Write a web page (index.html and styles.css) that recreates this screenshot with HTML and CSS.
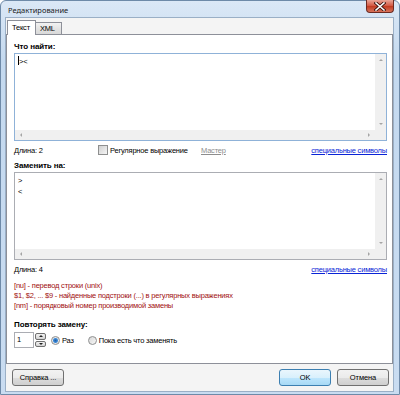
FILE: index.html
```html
<!DOCTYPE html>
<html lang="ru">
<head>
  <meta charset="UTF-8" />
  <title>Редактирование</title>
  <link rel="stylesheet" href="styles.css">
</head>
<body>
  <div class="window">
    <div class="titlebar">
      <span class="title">Редактирование</span>
      <div class="close">
        <svg width="12" height="9" viewBox="0 0 12 9">
          <path d="M2 1 L10 8 M10 1 L2 8" stroke="#3b1410" stroke-width="3.2" stroke-linecap="square"/>
          <path d="M2 1 L10 8 M10 1 L2 8" stroke="#ffffff" stroke-width="1.6" stroke-linecap="square"/>
        </svg>
      </div>
    </div>

    <div class="client">
      <div class="tabs">
        <span class="tab active">Текст</span>
        <span class="tab">XML</span>
      </div>

      <div class="page">
        <div class="label">Что найти:</div>
        <div class="editor focus">
          <div class="text"><span class="caret"></span>&gt;&lt;</div>
          <div class="vscroll"><span class="arr up"></span><span class="arr down"></span></div>
          <div class="hscroll"><span class="arr left"></span><span class="arr right"></span></div>
          <div class="corner"></div>
        </div>
        <div class="info">
          <span class="len">Длина: 2</span>
          <label class="check"><span class="box"></span>Регулярное выражение</label>
          <span class="disabled">Мастер</span>
          <a href="#" class="link">специальные символы</a>
        </div>

        <div class="label second">Заменить на:</div>
        <div class="editor">
          <div class="text">&gt;<br>&lt;</div>
          <div class="vscroll"><span class="arr up"></span><span class="arr down"></span></div>
          <div class="hscroll"><span class="arr left"></span><span class="arr right"></span></div>
          <div class="corner"></div>
        </div>
        <div class="info">
          <span class="len">Длина: 4</span>
          <a href="#" class="link">специальные символы</a>
        </div>

        <div class="hints">
          <div>[nu] - перевод строки (unix)</div>
          <div>$1, $2, ... $9 - найденные подстроки (...) в регулярных выражениях</div>
          <div>[nm] - порядковый номер производимой замены</div>
        </div>

        <div class="label third">Повторять замену:</div>
        <div class="repeat">
          <div class="spin">
            <span class="num">1</span>
            <div class="spinbtns"><span class="sb up"></span><span class="sb down"></span></div>
          </div>
          <label class="radio"><span class="dot checked"></span>Раз</label>
          <label class="radio"><span class="dot"></span>Пока есть что заменять</label>
        </div>
      </div>

      <div class="footer">
        <button class="btn">Справка ...</button>
        <div class="right">
          <button class="btn default">OK</button>
          <button class="btn">Отмена</button>
        </div>
      </div>
    </div>
  </div>
</body>
</html>
```

FILE: styles.css
```css
body {
  margin: 0;
  font-family: "Liberation Sans", Arial, sans-serif;
  font-size: 7.5px;
  letter-spacing: -0.2px;
  color: #000000;
}
.window {
  width: 400px;
  height: 395px;
  box-sizing: border-box;
  background: linear-gradient(#dbe8f6, #c4d9ef 60px, #c9dcf1);
  border: 1px solid #6e8aa8;
  border-radius: 6px 6px 0 0;
  padding: 0 5px 2px 4px;
  display: flex;
  flex-direction: column;
}
.titlebar {
  height: 16px;
  display: flex;
  justify-content: space-between;
  align-items: flex-start;
}
.title {
  font-family: "Noto Sans", sans-serif;
  font-size: 7.5px;
  letter-spacing: 0;
  margin: 4px 0 0 3px;
  color: #1b1b1b;
}
.close {
  width: 28px;
  height: 13px;
  margin-top: -1px;
  box-sizing: border-box;
  border: 1px solid #6b2a22;
  border-top: none;
  border-radius: 0 0 4px 4px;
  background: linear-gradient(#e9a597, #d2553f 50%, #c0391f 51%, #d8735b);
  display: flex;
  align-items: center;
  justify-content: center;
}
.client {
  flex: 1;
  background: #f4f4f4;
  display: flex;
  flex-direction: column;
  border: 1px solid #9aafc6;
}
.tabs {
  height: 16px;
  display: flex;
  align-items: flex-end;
  padding-left: 1px;
}
.tab {
  height: 11px;
  padding: 0 6px 0 4px;
  line-height: 11px;
  border: 1px solid #8d9099;
  border-bottom: none;
  background: linear-gradient(#f2f2f2, #e3e3e3 50%, #d9d9d9);
  margin-right: -1px;
}
.tab.active {
  height: 14px;
  line-height: 14px;
  background: #ffffff;
  position: relative;
  z-index: 1;
  margin-bottom: -1px;
  padding: 0 5px 0 4px;
}
.page {
  height: 328px;
  background: #ffffff;
  border: 1px solid #8d9099;
  padding: 0 5px 0 7px;
}
.label {
  font-size: 8px;
  letter-spacing: -0.1px;
  font-weight: bold;
  height: 10px;
  line-height: 10px;
  margin-top: 7px;
  margin-bottom: 1px;
}
.label.second { margin-top: 4px; }
.label.third { margin-top: 9px; }
.editor {
  height: 88px;
  box-sizing: border-box;
  border: 1px solid #abadb3;
  display: grid;
  grid-template-columns: 1fr 11px;
  grid-template-rows: 1fr 10px;
}
.editor.focus {
  border-color: #8fb2d8;
}
.text {
  padding: 2px 3px;
  line-height: 11px;
}
.caret {
  display: inline-block;
  width: 1px;
  height: 9px;
  background: #000000;
  vertical-align: -1px;
}
.vscroll, .hscroll, .corner {
  background: #f0f0f0;
  display: flex;
  justify-content: space-between;
  align-items: center;
}
.vscroll {
  flex-direction: column;
  padding: 5px 0;
}
.hscroll {
  padding: 0 5px;
}
.arr {
  width: 0;
  height: 0;
  border: 2px solid transparent;
}
.arr.up { border-bottom-color: #a5a5a5; border-top-width: 0; }
.arr.down { border-top-color: #a5a5a5; border-bottom-width: 0; }
.arr.left { border-right-color: #a5a5a5; border-left-width: 0; }
.arr.right { border-left-color: #a5a5a5; border-right-width: 0; }
.info {
  height: 14px;
  margin-top: 2px;
  display: flex;
  align-items: center;
}
.len {
  width: 84px;
}
.check {
  display: flex;
  align-items: center;
  width: 103px;
}
.box {
  width: 10px;
  height: 10px;
  box-sizing: border-box;
  border: 1px solid #8e8f8f;
  background: linear-gradient(135deg, #d0d0d0, #f6f6f6);
  margin-right: 2px;
}
.disabled {
  color: #8d8d8d;
  text-decoration: underline;
}
.link {
  margin-left: auto;
  color: #0a24d6;
  text-decoration: underline;
}
.hints {
  margin-top: 5px;
  color: #a11010;
  line-height: 10px;
}
.repeat {
  display: flex;
  align-items: center;
  margin-top: 2px;
  height: 16px;
}
.spin {
  display: flex;
  height: 16px;
  width: 32px;
}
.num {
  width: 20px;
  box-sizing: border-box;
  border: 1px solid #abadb3;
  background: #ffffff;
  padding-left: 2px;
  line-height: 14px;
}
.spinbtns {
  width: 11px;
  margin-left: 1px;
  display: flex;
  flex-direction: column;
  gap: 1px;
  padding: 1px 0;
}
.sb {
  flex: 1;
  border: 1px solid #707070;
  border-radius: 2px;
  background: linear-gradient(#f2f2f2, #d4d4d4);
  display: flex;
  align-items: center;
  justify-content: center;
}
.sb::after {
  content: "";
  border: 2px solid transparent;
}
.sb.up::after { border-bottom-color: #222; border-top-width: 0; }
.sb.down::after { border-top-color: #222; border-bottom-width: 0; }
.radio {
  display: flex;
  align-items: center;
  margin-left: 5px;
}
.radio + .radio {
  margin-left: 14px;
}
.dot {
  width: 9px;
  height: 9px;
  box-sizing: border-box;
  border-radius: 50%;
  border: 1px solid #8e8f8f;
  background: linear-gradient(135deg, #d6d6d6, #f8f8f8);
  margin-right: 2px;
}
.dot.checked {
  background: radial-gradient(circle, #1f5fa8 0, #3d8ad8 2px, #e8e8e8 3px);
}
.footer {
  flex: 1;
  display: flex;
  justify-content: space-between;
  align-items: flex-start;
  padding: 5px 4px 0 6px;
}
.right {
  display: flex;
  gap: 6px;
}
.btn {
  font-family: "Liberation Sans", Arial, sans-serif;
  font-size: 7.5px;
  letter-spacing: -0.1px;
  width: 52px;
  height: 17px;
  padding: 0;
  border: 1px solid #707070;
  border-radius: 3px;
  background: linear-gradient(#f2f2f2 0, #ebebeb 50%, #dddddd 51%, #cfcfcf);
  color: #000000;
}
.btn.default {
  border-color: #3c7fb1;
  background: linear-gradient(#eaf6fd 0, #d9f0fc 50%, #bee6fd 51%, #a7d9f5);
}
```
